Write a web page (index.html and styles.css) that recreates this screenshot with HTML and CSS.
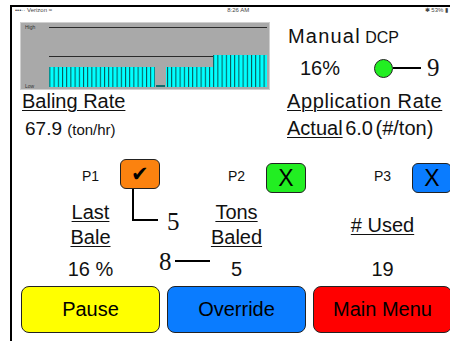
FILE: index.html
```html
<!DOCTYPE html>
<html lang="en">
<head>
  <meta charset="UTF-8">
  <meta name="viewport" content="width=device-width, initial-scale=1.0">
  <title>Baler Monitor</title>
  <link rel="stylesheet" href="styles.css">
</head>
<body>
  <div class="screen">
    <div class="statusbar">
      <span>•••·· Verizon ≈</span>
      <span>8:26 AM</span>
      <span>✱ 53% ▮</span>
    </div>

    <div class="top">
      <svg class="chart" width="250" height="68" viewBox="0 0 250 68">
        <defs>
          <pattern id="bars" width="4.2" height="10" patternUnits="userSpaceOnUse">
            <rect width="4.2" height="10" fill="#00ffff"/>
            <rect width="1" height="10" fill="#0b4f4f"/>
          </pattern>
        </defs>
        <rect x="0.5" y="0.5" width="249" height="67" fill="#a9a9a9" stroke="#cfcfcf"/>
        <text x="5" y="7" class="axis">High</text>
        <text x="5" y="66" class="axis">Low</text>
        <line x1="29" y1="5.5" x2="247" y2="5.5" stroke="#2a2a2a" stroke-width="1"/>
        <line x1="29" y1="34.5" x2="247" y2="34.5" stroke="#2a2a2a" stroke-width="1"/>
        <rect x="29" y="45" width="106" height="20" fill="url(#bars)"/>
        <rect x="136" y="63" width="9" height="2" fill="#0b6f6f"/>
        <rect x="146" y="45" width="47" height="20" fill="url(#bars)"/>
        <rect x="193" y="33" width="54" height="32" fill="url(#bars)"/>
      </svg>

      <div class="dcp">
        <div class="dcp-title"><span class="manual">Manual</span> <span class="dcp-label">DCP</span></div>
        <div class="dcp-row">
          <span class="dcp-pct">16%</span>
          <span class="dot"></span>
          <span class="lead"></span>
          <span class="callnum">9</span>
        </div>
      </div>
    </div>

    <div class="rates">
      <div class="rate">
        <div class="rate-title"><u>Baling Rate</u></div>
        <div class="rate-value baling">67.9 <small>(ton/hr)</small></div>
      </div>
      <div class="rate">
        <div class="rate-title app"><u>Application Rate</u></div>
        <div class="rate-value actual"><u>Actual</u> 6.0 (#/ton)</div>
      </div>
    </div>

    <div class="grid3 pumps">
      <div class="pump">
        <span class="pump-label">P1</span>
        <span class="pump-btn orange raised">✔</span>
      </div>
      <div class="pump">
        <span class="pump-label">P2</span>
        <span class="pump-btn green">X</span>
      </div>
      <div class="pump">
        <span class="pump-label">P3</span>
        <span class="pump-btn blue">X</span>
      </div>
    </div>

    <div class="grid3 stats">
      <div class="stat"><u>Last</u><br><u>Bale</u></div>
      <div class="stat"><u>Tons</u><br><u>Baled</u></div>
      <div class="stat"><u># Used</u></div>
    </div>

    <div class="grid3 values">
      <div>16 %</div>
      <div>5</div>
      <div>19</div>
    </div>

    <div class="grid3 buttons">
      <button class="btn yellow">Pause</button>
      <button class="btn blue">Override</button>
      <button class="btn red">Main Menu</button>
    </div>

    <!-- annotation callouts drawn over the screen -->
    <div class="bracket"></div>
    <div class="callout five">5</div>
    <div class="callout eight">8</div>
    <div class="dash"></div>
  </div>
</body>
</html>
```

FILE: styles.css
```css
body {
  margin: 0;
  overflow: hidden;
  background: #fff;
  font-family: "Liberation Sans", Arial, sans-serif;
  color: #111;
}
.screen {
  position: relative;
  margin: 5px 0 0 10px;
  height: 334px;
  overflow: hidden;
  border-left: 2px solid #000;
  border-top: 2px solid #000;
}
.statusbar {
  display: flex;
  justify-content: space-between;
  height: 15px;
  padding: 0 2px 0 3px;
  font-size: 6px;
  line-height: 7px;
  color: #444;
}

/* chart + DCP */
.top {
  display: flex;
  height: 68px;
  padding-left: 8px;
}
.chart {
  display: block;
  flex: none;
}
.axis {
  font-size: 5px;
  fill: #333;
}
.dcp {
  margin-left: 18px;
  padding-top: 3px;
}
.dcp-title {
  height: 23px;
  line-height: 23px;
}
.manual {
  font-size: 20px;
  letter-spacing: 1.2px;
}
.dcp-label {
  font-size: 16px;
}
.dcp-row {
  display: flex;
  align-items: center;
  margin-top: 8px;
  padding-left: 12px;
  height: 24px;
}
.dcp-pct {
  font-size: 20px;
  width: 74px;
}
.dot {
  width: 17px;
  height: 17px;
  border: 1px solid #222;
  border-radius: 50%;
  background: #22ee22;
}
.lead {
  width: 28px;
  border-top: 2px solid #000;
}
.callnum {
  margin-left: 6px;
  font-family: "Liberation Serif", "Times New Roman", serif;
  font-size: 25px;
}

/* rates */
.rates {
  display: grid;
  grid-template-columns: 265px 1fr;
  padding-left: 10px;
  height: 52px;
}
.rate-title {
  font-size: 20px;
  line-height: 23px;
}
.rate-title.app {
  letter-spacing: 0.6px;
}
.rate-value {
  margin-top: 4px;
  font-size: 19px;
  line-height: 23px;
}
.rate-value.baling {
  padding-left: 3px;
}
.rate-value.actual {
  font-size: 20px;
  word-spacing: -3px;
}
.rate-value small {
  font-size: 15px;
}
u {
  text-decoration-thickness: 1px;
  text-underline-offset: 2px;
}

/* three column rows */
.grid3 {
  display: grid;
  grid-template-columns: 139px 139px 139px;
  column-gap: 7px;
  padding-left: 9px;
}
.pumps {
  margin-top: 17px;
  height: 34px;
}
.pump {
  display: flex;
  align-items: center;
  padding-left: 61px;
}
.pump-label {
  font-size: 14px;
  width: 19px;
  margin-right: 19px;
}
.pump-btn {
  display: flex;
  align-items: center;
  justify-content: center;
  width: 39px;
  height: 28px;
  border: 1px solid #222;
  border-radius: 6px;
  font-size: 23px;
  color: #000;
  align-self: flex-end;
}
.pump-btn.raised {
  align-self: flex-start;
  font-family: "DejaVu Sans", sans-serif;
  font-size: 21px;
}
.orange { background: #fb820f; }
.green { background: #22ee22; }
.blue { background: #0a7cff; }
.yellow { background: #ffff00; }
.red { background: #ff0000; }

.stats {
  margin-top: 7px;
  height: 50px;
  align-items: center;
  text-align: center;
  font-size: 20px;
  line-height: 25px;
}
.values {
  margin-top: 7px;
  text-align: center;
  font-size: 20px;
  line-height: 25px;
}
.buttons {
  margin-top: 4px;
}
.btn {
  height: 47px;
  border: 1px solid #222;
  border-radius: 8px;
  font-family: "Liberation Sans", Arial, sans-serif;
  font-size: 20px;
  color: #000;
  padding: 0;
}

/* callouts */
.bracket {
  position: absolute;
  left: 120px;
  top: 182px;
  width: 24px;
  height: 30px;
  border-left: 2px solid #000;
  border-bottom: 2px solid #000;
}
.callout {
  position: absolute;
  font-family: "Liberation Serif", "Times New Roman", serif;
  font-size: 25px;
  line-height: 1;
}
.five {
  left: 155px;
  top: 202px;
}
.eight {
  left: 147px;
  top: 242px;
}
.dash {
  position: absolute;
  left: 163px;
  top: 253px;
  width: 35px;
  border-top: 2px solid #000;
}
```
